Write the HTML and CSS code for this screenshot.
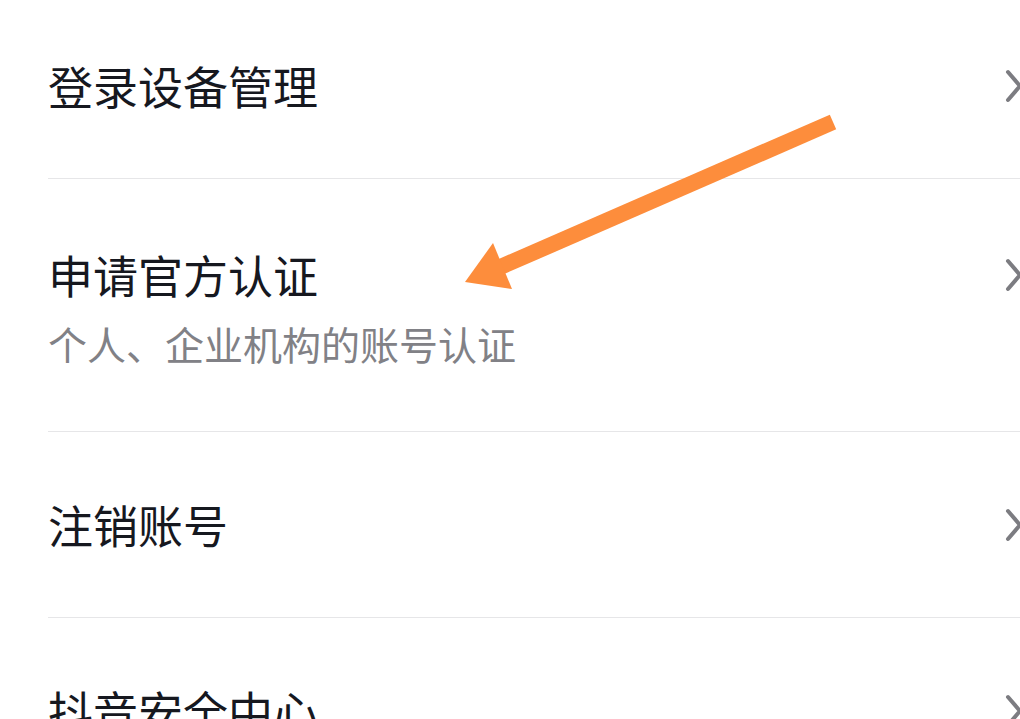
FILE: index.html
```html
<!DOCTYPE html>
<html lang="zh-CN">
<head>
<meta charset="utf-8">
<title>账号与安全</title>
<link rel="stylesheet" href="styles.css">
</head>
<body>
<div class="page">
  <ul class="list">
    <li class="row">
      <div class="line">
        <span class="title">登录设备管理</span>
        <svg class="chev" viewBox="0 0 18 34"><path d="M3 3 L15 17 L3 31"/></svg>
      </div>
    </li>
    <li class="row row-sub">
      <div class="line">
        <span class="title">申请官方认证</span>
        <svg class="chev" viewBox="0 0 18 34"><path d="M3 3 L15 17 L3 31"/></svg>
      </div>
      <div class="sub">个人、企业机构的账号认证</div>
    </li>
    <li class="row">
      <div class="line">
        <span class="title">注销账号</span>
        <svg class="chev" viewBox="0 0 18 34"><path d="M3 3 L15 17 L3 31"/></svg>
      </div>
    </li>
    <li class="row">
      <div class="line">
        <span class="title">抖音安全中心</span>
        <svg class="chev" viewBox="0 0 18 34"><path d="M3 3 L15 17 L3 31"/></svg>
      </div>
    </li>
  </ul>
  <svg class="arrow" viewBox="0 0 1020 719" aria-hidden="true">
    <line x1="833" y1="122" x2="498" y2="268" />
    <polygon points="465,282 493,243 512,289" />
  </svg>
</div>
</body>
</html>
```
FILE: styles.css
```css
html, body {
  margin: 0;
  padding: 0;
  background: #ffffff;
}
body {
  width: 1020px;
  height: 719px;
  overflow: hidden;
  font-family: "Noto Sans CJK SC", "Noto Sans", sans-serif;
}
.page {
  position: relative;
  width: 1020px;
  height: 719px;
  overflow: hidden;
}
.list {
  list-style: none;
  margin: -7px 0 0 48px;
  padding: 0;
}
.row {
  padding: 61px 0;
  border-bottom: 1px solid #e6e6e8;
}
.row-sub {
  padding: 64px 0 61px;
}
.line {
  display: flex;
  align-items: center;
  justify-content: space-between;
}
.title {
  font-size: 45px;
  line-height: 63px;
  color: #16181f;
}
.sub {
  margin-top: 10px;
  font-size: 39px;
  line-height: 54px;
  color: #818186;
}
.chev {
  width: 18px;
  height: 34px;
  margin-right: -3px;
  flex: none;
}
.chev path {
  fill: none;
  stroke: #7c7c81;
  stroke-width: 4;
  stroke-linecap: round;
  stroke-linejoin: round;
}
.arrow {
  position: absolute;
  left: 0;
  top: 0;
  width: 1020px;
  height: 719px;
}
.arrow line {
  stroke: #fd8d3c;
  stroke-width: 16;
}
.arrow polygon {
  fill: #fd8d3c;
}
```
